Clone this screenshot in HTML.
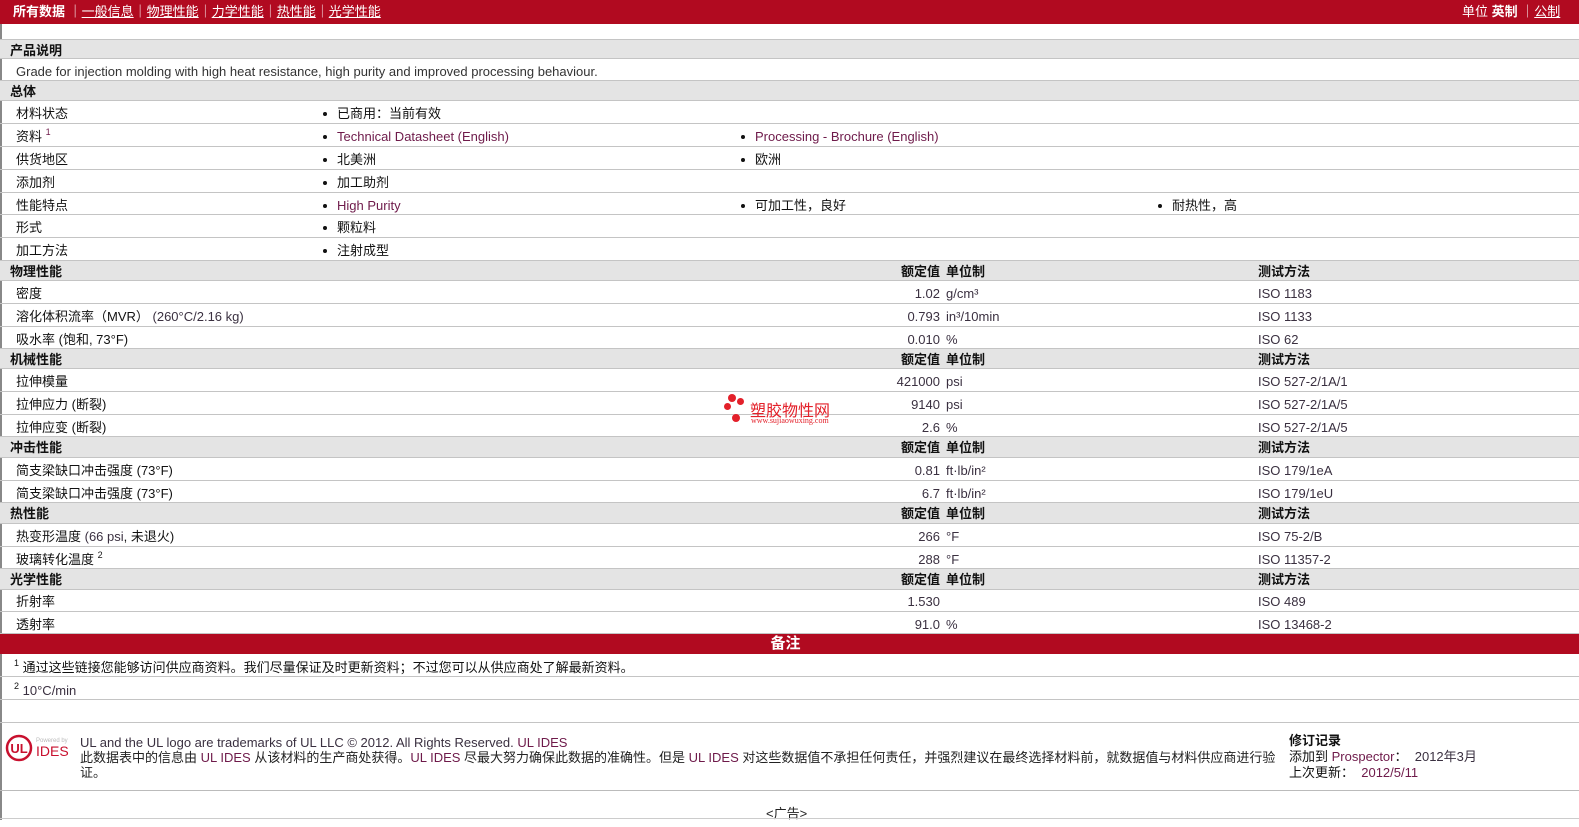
<!DOCTYPE html>
<html><head><meta charset="utf-8"><style>
*{margin:0;padding:0;box-sizing:border-box}
body{width:1579px;height:827px;background:#fff;font-family:"Liberation Sans","Noto Sans CJK SC",sans-serif;font-size:13px;color:#111;position:relative;overflow:hidden}
.a{position:absolute}
.top{left:0;top:0;width:1579px;height:24px;background:#b10a20;color:#fff;font-size:13px;line-height:24px}
.top u{text-decoration:underline}
.r{position:absolute;left:0;width:1579px;border-bottom:1px solid #c4c4c4}
.g{background:#e4e4e4;font-weight:bold}
.r span{position:absolute;white-space:nowrap;line-height:15px}
.r span span{position:static}
.lnk{color:#6e1a4a}
.d{color:#3a3040}
.b::before{content:"";position:absolute;left:-14px;top:6px;width:4px;height:4px;border-radius:50%;background:#111}
.lb{position:absolute;left:0;top:24px;width:2px;height:796px;background:#888}
sup{font-size:9px;vertical-align:6px;line-height:0}
</style></head><body>
<div class="a top"><span class="a" style="left:13px"><b>所有数据</b> ｜<u>一般信息</u>｜<u>物理性能</u>｜<u>力学性能</u>｜<u>热性能</u>｜<u>光学性能</u></span><span class="a" style="left:1462px">单位 <b>英制</b> ｜<u>公制</u></span></div>
<div class="lb"></div>

<div class="r g" style="top:39px;height:20px;border-top:1px solid #c4c4c4"><span style="left:10px;top:3px">产品说明</span></div>
<div class="r" style="top:59px;height:22px"><span style="left:16px;top:5px;color:#333">Grade for injection molding with high heat resistance, high purity and improved processing behaviour.</span></div>
<div class="r g" style="top:81px;height:20px"><span style="left:10px;top:3px">总体</span></div>
<div class="r" style="top:101px;height:23px"><span style="left:16px;top:5px">材料状态</span><span class="b" style="left:337px;top:5px">已商用：当前有效</span></div>
<div class="r" style="top:124px;height:23px"><span style="left:16px;top:5px">资料 <sup class="lnk">1</sup></span><span class="b lnk" style="left:337px;top:5px">Technical Datasheet (English)</span><span class="b lnk" style="left:755px;top:5px">Processing - Brochure (English)</span></div>
<div class="r" style="top:147px;height:23px"><span style="left:16px;top:5px">供货地区</span><span class="b" style="left:337px;top:5px">北美洲</span><span class="b" style="left:755px;top:5px">欧洲</span></div>
<div class="r" style="top:170px;height:23px"><span style="left:16px;top:5px">添加剂</span><span class="b" style="left:337px;top:5px">加工助剂</span></div>
<div class="r" style="top:193px;height:22px"><span style="left:16px;top:5px">性能特点</span><span class="b lnk" style="left:337px;top:5px">High Purity</span><span class="b" style="left:755px;top:5px">可加工性，良好</span><span class="b" style="left:1172px;top:5px">耐热性，高</span></div>
<div class="r" style="top:215px;height:23px"><span style="left:16px;top:5px">形式</span><span class="b" style="left:337px;top:5px">颗粒料</span></div>
<div class="r" style="top:238px;height:23px"><span style="left:16px;top:5px">加工方法</span><span class="b" style="left:337px;top:5px">注射成型</span></div>

<div class="r g" style="top:261px;height:20px"><span style="left:10px;top:3px">物理性能</span><span style="right:639px;top:3px">额定值</span><span style="left:946px;top:3px">单位制</span><span style="left:1258px;top:3px">测试方法</span></div>
<div class="r" style="top:281px;height:23px"><span style="left:16px;top:5px">密度</span><span class="d" style="right:639px;top:5px">1.02</span><span class="d" style="left:946px;top:5px">g/cm³</span><span class="d" style="left:1258px;top:5px">ISO 1183</span></div>
<div class="r" style="top:304px;height:23px"><span style="left:16px;top:5px">溶化体积流率（MVR） <span class="d">(260°C/2.16 kg)</span></span><span class="d" style="right:639px;top:5px">0.793</span><span class="d" style="left:946px;top:5px">in³/10min</span><span class="d" style="left:1258px;top:5px">ISO 1133</span></div>
<div class="r" style="top:327px;height:22px"><span style="left:16px;top:5px">吸水率 (饱和, 73°F)</span><span class="d" style="right:639px;top:5px">0.010</span><span class="d" style="left:946px;top:5px">%</span><span class="d" style="left:1258px;top:5px">ISO 62</span></div>

<div class="r g" style="top:349px;height:20px"><span style="left:10px;top:3px">机械性能</span><span style="right:639px;top:3px">额定值</span><span style="left:946px;top:3px">单位制</span><span style="left:1258px;top:3px">测试方法</span></div>
<div class="r" style="top:369px;height:23px"><span style="left:16px;top:5px">拉伸模量</span><span class="d" style="right:639px;top:5px">421000</span><span class="d" style="left:946px;top:5px">psi</span><span class="d" style="left:1258px;top:5px">ISO 527-2/1A/1</span></div>
<div class="r" style="top:392px;height:23px"><span style="left:16px;top:5px">拉伸应力 (断裂)</span><span class="d" style="right:639px;top:5px">9140</span><span class="d" style="left:946px;top:5px">psi</span><span class="d" style="left:1258px;top:5px">ISO 527-2/1A/5</span></div>
<div class="r" style="top:415px;height:22px"><span style="left:16px;top:5px">拉伸应变 (断裂)</span><span class="d" style="right:639px;top:5px">2.6</span><span class="d" style="left:946px;top:5px">%</span><span class="d" style="left:1258px;top:5px">ISO 527-2/1A/5</span></div>

<div class="r g" style="top:437px;height:21px"><span style="left:10px;top:3px">冲击性能</span><span style="right:639px;top:3px">额定值</span><span style="left:946px;top:3px">单位制</span><span style="left:1258px;top:3px">测试方法</span></div>
<div class="r" style="top:458px;height:23px"><span style="left:16px;top:5px">简支梁缺口冲击强度 (73°F)</span><span class="d" style="right:639px;top:5px">0.81</span><span class="d" style="left:946px;top:5px">ft·lb/in²</span><span class="d" style="left:1258px;top:5px">ISO 179/1eA</span></div>
<div class="r" style="top:481px;height:22px"><span style="left:16px;top:5px">简支梁缺口冲击强度 (73°F)</span><span class="d" style="right:639px;top:5px">6.7</span><span class="d" style="left:946px;top:5px">ft·lb/in²</span><span class="d" style="left:1258px;top:5px">ISO 179/1eU</span></div>

<div class="r g" style="top:503px;height:21px"><span style="left:10px;top:3px">热性能</span><span style="right:639px;top:3px">额定值</span><span style="left:946px;top:3px">单位制</span><span style="left:1258px;top:3px">测试方法</span></div>
<div class="r" style="top:524px;height:23px"><span style="left:16px;top:5px">热变形温度 <span class="d">(66 psi</span>, 未退火)</span><span class="d" style="right:639px;top:5px">266</span><span class="d" style="left:946px;top:5px">°F</span><span class="d" style="left:1258px;top:5px">ISO 75-2/B</span></div>
<div class="r" style="top:547px;height:22px"><span style="left:16px;top:5px">玻璃转化温度 <sup>2</sup></span><span class="d" style="right:639px;top:5px">288</span><span class="d" style="left:946px;top:5px">°F</span><span class="d" style="left:1258px;top:5px">ISO 11357-2</span></div>

<div class="r g" style="top:569px;height:21px"><span style="left:10px;top:3px">光学性能</span><span style="right:639px;top:3px">额定值</span><span style="left:946px;top:3px">单位制</span><span style="left:1258px;top:3px">测试方法</span></div>
<div class="r" style="top:590px;height:22px"><span style="left:16px;top:4px">折射率</span><span class="d" style="right:639px;top:4px">1.530</span><span class="d" style="left:1258px;top:4px">ISO 489</span></div>
<div class="r" style="top:612px;height:22px"><span style="left:16px;top:5px">透射率</span><span class="d" style="right:639px;top:5px">91.0</span><span class="d" style="left:946px;top:5px">%</span><span class="d" style="left:1258px;top:5px">ISO 13468-2</span></div>

<div class="a" style="left:0;top:634px;width:1579px;height:20px;background:#b10a20;color:#fff;font-weight:bold;font-size:15px;text-align:center;line-height:20px;padding-right:8px">备注</div>
<div class="r" style="top:654px;height:23px"><span style="left:14px;top:6px"><sup>1</sup> 通过这些链接您能够访问供应商资料。我们尽量保证及时更新资料；不过您可以从供应商处了解最新资料。</span></div>
<div class="r" style="top:677px;height:23px"><span style="left:14px;top:6px"><sup>2</sup> <span class="d">10°C/min</span></span></div>
<div class="r" style="top:700px;height:23px"></div>

<svg class="a" style="left:5px;top:733px" width="70" height="32" viewBox="0 0 70 32"><circle cx="14" cy="15" r="12" fill="none" stroke="#c8102e" stroke-width="2.5"/><text x="14" y="20" font-family="Liberation Sans" font-weight="bold" font-size="13" fill="#c8102e" text-anchor="middle">UL</text><text x="31" y="9" font-family="Liberation Sans" font-size="6" fill="#bbb">Powered by</text><text x="31" y="23" font-family="Liberation Sans" font-size="14" fill="#c8102e">IDES</text></svg>
<div class="a" style="left:80px;top:735px;line-height:15px;color:#222;width:1200px"><span class="d">UL and the UL logo are trademarks of UL LLC © 2012. All Rights Reserved. </span><span class="lnk">UL IDES</span><br><span style="white-space:nowrap">此数据表中的信息由 <span class="lnk">UL IDES</span> 从该材料的生产商处获得。<span class="lnk">UL IDES</span> 尽最大努力确保此数据的准确性。但是 <span class="lnk">UL IDES</span> 对这些数据值不承担任何责任，并强烈建议在最终选择材料前，就数据值与材料供应商进行验</span><br>证。</div>
<div class="a" style="left:1289px;top:733px;line-height:16px"><b>修订记录</b><br>添加到 <span class="lnk">Prospector</span>： &nbsp;<span class="d">2012年3月</span><br>上次更新： &nbsp;<span class="lnk">2012/5/11</span></div>
<div class="a" style="left:0;top:790px;width:1579px;border-top:1px solid #bbb"></div>
<div class="a" style="left:766px;top:803px;color:#222">&lt;广告&gt;</div>
<div class="a" style="left:0;top:818px;width:1579px;border-top:1px solid #ccc"></div>

<div class="a" style="left:722px;top:394px;width:130px;height:34px">
<div class="a" style="left:6px;top:0;width:8px;height:8px;border-radius:50%;background:#e3202a"></div>
<div class="a" style="left:15px;top:4px;width:7px;height:7px;border-radius:50%;background:#e3202a"></div>
<div class="a" style="left:2px;top:9px;width:7px;height:7px;border-radius:50%;background:#e3202a"></div>
<div class="a" style="left:10px;top:20px;width:8px;height:8px;border-radius:50%;background:#e3202a"></div>
<div class="a" style="left:28px;top:3px;color:#e3202a;font-size:16px;white-space:nowrap">塑胶物性网</div>
<div class="a" style="left:29px;top:22px;color:#e3202a;font-size:8px;font-family:'Liberation Serif',serif;white-space:nowrap">www.sujiaowuxing.com</div>
</div>
</body></html>
